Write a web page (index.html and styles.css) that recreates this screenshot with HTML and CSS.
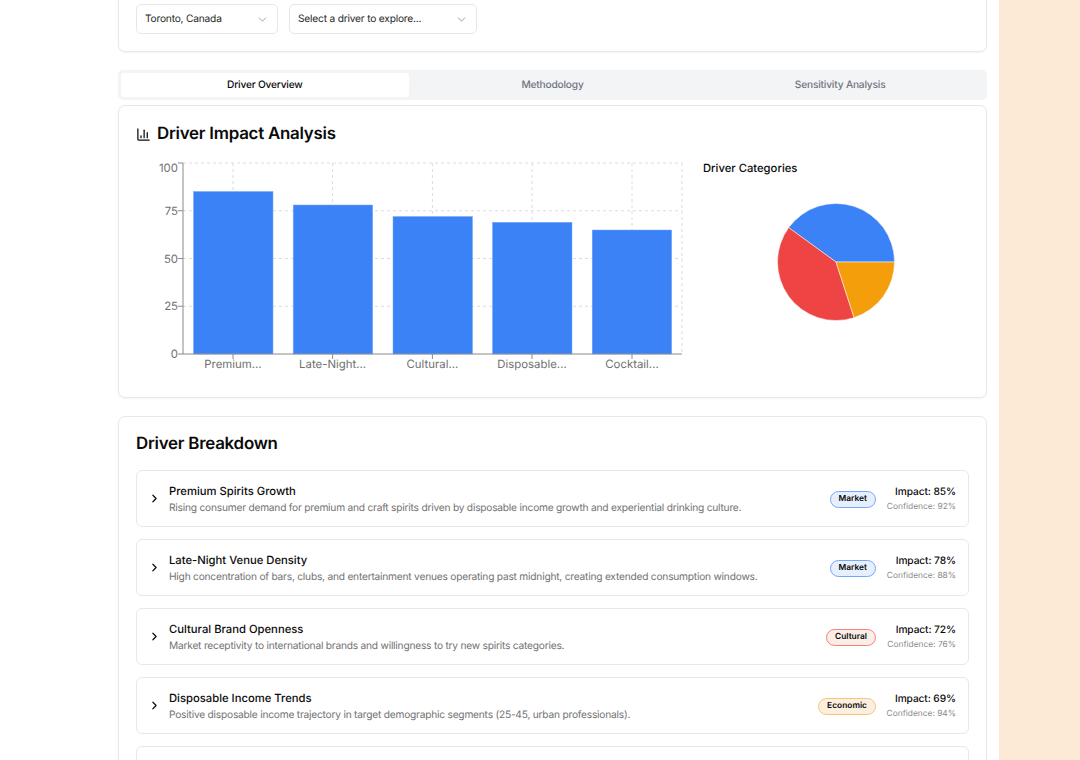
FILE: index.html
```html
<!DOCTYPE html>
<html lang="en">

<head>
    <meta charset="UTF-8">
    <title>Driver Analysis</title>
    <meta name="viewport" content="width=device-width, initial-scale=1">
    <link rel="stylesheet" href="styles.css">
</head>

<body>

    <div class="page">
        <main class="content">

            <section class="card filters">
                <div class="select select-city">
                    <span>Toronto, Canada</span>
                    <svg class="chevron" viewBox="0 0 24 24"><path d="m6 9 6 6 6-6" /></svg>
                </div>
                <div class="select select-driver">
                    <span>Select a driver to explore...</span>
                    <svg class="chevron" viewBox="0 0 24 24"><path d="m6 9 6 6 6-6" /></svg>
                </div>
            </section>

            <nav class="tabs">
                <div class="tab active">Driver Overview</div>
                <div class="tab">Methodology</div>
                <div class="tab">Sensitivity Analysis</div>
            </nav>

            <section class="card impact">
                <h2 class="card-title">
                    <svg class="title-icon" viewBox="0 0 24 24">
                        <path d="M3 3v16a2 2 0 0 0 2 2h16" />
                        <path d="M8 17v-3" />
                        <path d="M13 17V5" />
                        <path d="M18 17V9" />
                    </svg>
                    Driver Impact Analysis
                </h2>
                <div class="impact-grid">
                    <svg class="bar-chart" width="550" height="222" viewBox="136 155 550 222">
                        <g class="grid">
                            <path d="M183 163H682M183 210.750H682M183 258.500H682M183 306.250H682" />
                            <path d="M233 163V354M332.600 163V354M432.400 163V354M532 163V354M632 163V354M682 163V354" />
                        </g>
                        <g class="bars">
                            <rect x="193.500" y="191.500" width="79.500" height="162.500" />
                            <rect x="293.200" y="205" width="79.500" height="149" />
                            <rect x="393" y="216.500" width="79.500" height="137.500" />
                            <rect x="492.500" y="222.300" width="79.500" height="131.700" />
                            <rect x="592.200" y="230" width="79.500" height="124" />
                        </g>
                        <path class="axis" d="M178 163H183V354H682M178 210.750H183M178 258.500H183M178 306.250H183M178 354H183M233 354V359M332.600 354V359M432.400 354V359M532 354V359M632 354V359" />
                        <g class="y-labels">
                            <text x="178" y="172">100</text>
                            <text x="178" y="215">75</text>
                            <text x="178" y="263">50</text>
                            <text x="178" y="310">25</text>
                            <text x="178" y="358">0</text>
                        </g>
                        <g class="x-labels">
                            <text x="233" y="368">Premium...</text>
                            <text x="332.600" y="368">Late-Night...</text>
                            <text x="432.400" y="368">Cultural...</text>
                            <text x="532" y="368">Disposable...</text>
                            <text x="632" y="368">Cocktail...</text>
                        </g>
                    </svg>
                    <div class="categories">
                        <h3>Driver Categories</h3>
                        <svg class="pie" width="120" height="120" viewBox="-60 -60 120 120">
                            <path class="slice-blue" d="M0 0L58.500 0A58.500 58.500 0 0 0 -47.330 -34.390Z" />
                            <path class="slice-red" d="M0 0L-47.330 -34.390A58.500 58.500 0 0 0 18.080 55.640Z" />
                            <path class="slice-orange" d="M0 0L18.080 55.640A58.500 58.500 0 0 0 58.500 0Z" />
                        </svg>
                    </div>
                </div>
            </section>

            <section class="card breakdown">
                <h2 class="card-title">Driver Breakdown</h2>
                <div class="driver-list">

                    <article class="driver">
                        <svg class="driver-arrow" viewBox="0 0 24 24"><path d="m9 18 6-6-6-6" /></svg>
                        <div class="driver-text">
                            <h4>Premium Spirits Growth</h4>
                            <p>Rising consumer demand for premium and craft spirits driven by disposable income growth and experiential drinking culture.</p>
                        </div>
                        <span class="badge badge-market">Market</span>
                        <div class="driver-score">
                            <strong>Impact: 85%</strong>
                            <span>Confidence: 92%</span>
                        </div>
                    </article>

                    <article class="driver">
                        <svg class="driver-arrow" viewBox="0 0 24 24"><path d="m9 18 6-6-6-6" /></svg>
                        <div class="driver-text">
                            <h4>Late-Night Venue Density</h4>
                            <p>High concentration of bars, clubs, and entertainment venues operating past midnight, creating extended consumption windows.</p>
                        </div>
                        <span class="badge badge-market">Market</span>
                        <div class="driver-score">
                            <strong>Impact: 78%</strong>
                            <span>Confidence: 88%</span>
                        </div>
                    </article>

                    <article class="driver">
                        <svg class="driver-arrow" viewBox="0 0 24 24"><path d="m9 18 6-6-6-6" /></svg>
                        <div class="driver-text">
                            <h4>Cultural Brand Openness</h4>
                            <p>Market receptivity to international brands and willingness to try new spirits categories.</p>
                        </div>
                        <span class="badge badge-cultural">Cultural</span>
                        <div class="driver-score">
                            <strong>Impact: 72%</strong>
                            <span>Confidence: 76%</span>
                        </div>
                    </article>

                    <article class="driver">
                        <svg class="driver-arrow" viewBox="0 0 24 24"><path d="m9 18 6-6-6-6" /></svg>
                        <div class="driver-text">
                            <h4>Disposable Income Trends</h4>
                            <p>Positive disposable income trajectory in target demographic segments (25-45, urban professionals).</p>
                        </div>
                        <span class="badge badge-economic">Economic</span>
                        <div class="driver-score">
                            <strong>Impact: 69%</strong>
                            <span>Confidence: 94%</span>
                        </div>
                    </article>

                    <article class="driver"></article>

                </div>
            </section>

        </main>
        <aside class="side-panel"></aside>
    </div>

</body>

</html>
```

FILE: styles.css
```css
* {
    box-sizing: border-box;
}

html,
body {
    height: 100%;
}

body {
    margin: 0;
    overflow: hidden;
    background: #fff;
    color: #0a0a0a;
    font-family: Inter, "Noto Sans", sans-serif;
    text-rendering: geometricPrecision;
}

.page {
    display: flex;
    height: 760px;
    overflow: hidden;
}

.content {
    width: 999px;
    flex-shrink: 0;
    padding: 0 12px 0 118px;
}

.side-panel {
    flex: 1;
    background: #fce9d6;
}

.card {
    background: #fff;
    border: 1px solid #e8e8e8;
    border-radius: 7px;
    box-shadow: 0 1px 2px rgba(0, 0, 0, 0.05);
}

/* filter card is scrolled off the top of the window */
.filters {
    display: flex;
    align-items: flex-end;
    gap: 11px;
    height: 72px;
    margin-top: -20px;
    padding: 0 17px 17px;
}

.select {
    display: flex;
    align-items: center;
    justify-content: space-between;
    height: 30px;
    padding: 0 8px;
    border: 1px solid #e5e7eb;
    border-radius: 5px;
    font-size: 10.200px;
    letter-spacing: -0.2px;
    color: #262626;
}

.select-city {
    width: 142px;
}

.select-driver {
    width: 188px;
}

.chevron {
    width: 13px;
    height: 13px;
    fill: none;
    stroke: #888;
    stroke-width: 1.500;
    stroke-linecap: round;
    stroke-linejoin: round;
}

.tabs {
    display: grid;
    grid-template-columns: repeat(3, 1fr);
    height: 30px;
    margin-top: 18px;
    padding: 3px;
    background: #f3f4f6;
    border-radius: 5px;
}

.tab {
    display: flex;
    align-items: center;
    justify-content: center;
    border-radius: 3px;
    font-size: 10.200px;
    letter-spacing: -0.2px;
    font-weight: 500;
    color: #6f7480;
}

.tab.active {
    background: #fff;
    color: #0a0a0a;
}

.impact {
    height: 293px;
    margin-top: 5px;
    padding: 18px 17px 17px;
}

.card-title {
    display: flex;
    align-items: center;
    gap: 6px;
    margin: 0;
    font-size: 16.900px;
    line-height: 20px;
    font-weight: 600;
    letter-spacing: -0.25px;
}

.title-icon {
    width: 15px;
    height: 15px;
    fill: none;
    stroke: #0a0a0a;
    stroke-width: 2;
    stroke-linecap: round;
    stroke-linejoin: round;
}

.impact-grid {
    display: flex;
    gap: 17px;
    margin-top: 11px;
}

.bar-chart {
    display: block;
    flex-shrink: 0;
}

.grid path {
    fill: none;
    stroke: #dcdcdc;
    stroke-dasharray: 3 3;
}

.bars rect {
    fill: #3b82f6;
    stroke: #7aa9f9;
    stroke-width: 0.500;
}

.axis {
    fill: none;
    stroke: #8a8a8a;
}

.y-labels text,
.x-labels text {
    fill: #6f6f6f;
    font-size: 11.400px;
}

.y-labels text {
    text-anchor: end;
}

.x-labels text {
    text-anchor: middle;
}

.categories {
    flex: 1;
}

.categories h3 {
    margin: 6px 0 0;
    font-size: 11.250px;
    line-height: 14px;
    font-weight: 500;
}

.pie {
    display: block;
    margin: 27px 0 0 73px;
}

.slice-blue,
.slice-red,
.slice-orange {
    stroke: #fff;
    stroke-width: 0.500;
}

.slice-blue {
    fill: #3b82f6;
}

.slice-red {
    fill: #ef4444;
}

.slice-orange {
    fill: #f59e0b;
}

.breakdown {
    height: 400px;
    margin-top: 18px;
    padding: 17px;
}

.breakdown .card-title {
    margin-bottom: 16px;
}

.driver-list {
    display: flex;
    flex-direction: column;
    gap: 12px;
}

.driver {
    display: flex;
    align-items: center;
    flex-shrink: 0;
    height: 57px;
    padding: 0 12px 0 11px;
    border: 1px solid #e8e8e8;
    border-radius: 6px;
}

.driver-arrow {
    width: 13px;
    height: 13px;
    flex-shrink: 0;
    fill: none;
    stroke: #0a0a0a;
    stroke-width: 2.200;
    stroke-linecap: round;
    stroke-linejoin: round;
}

.driver-text {
    flex: 1;
    margin-left: 8px;
    padding-top: 2px;
}

.driver-text h4 {
    margin: 0;
    font-size: 11.250px;
    line-height: 15px;
    font-weight: 500;
}

.driver-text p {
    margin: 3px 0 0;
    font-size: 10.200px;
    letter-spacing: -0.22px;
    line-height: 13px;
    color: #737373;
}

.badge {
    margin-top: 2px;
    padding: 1px 8px;
    border: 1.500px solid;
    border-radius: 999px;
    font-size: 8.400px;
    line-height: 13px;
    font-weight: 600;
}

.badge-market {
    background: #e6effd;
    border-color: #76a6f9;
}

.badge-cultural {
    background: #fbeee6;
    border-color: #f48080;
}

.badge-economic {
    background: #fcefe0;
    border-color: #f8c47c;
}

.driver-score {
    display: flex;
    flex-direction: column;
    align-items: flex-end;
    width: 80px;
    padding-top: 2px;
}

.driver-score strong {
    font-size: 10.200px;
    letter-spacing: -0.1px;
    line-height: 15px;
    font-weight: 500;
}

.driver-score span {
    font-size: 8.400px;
    line-height: 14px;
    color: #8a8a8a;
}
```
